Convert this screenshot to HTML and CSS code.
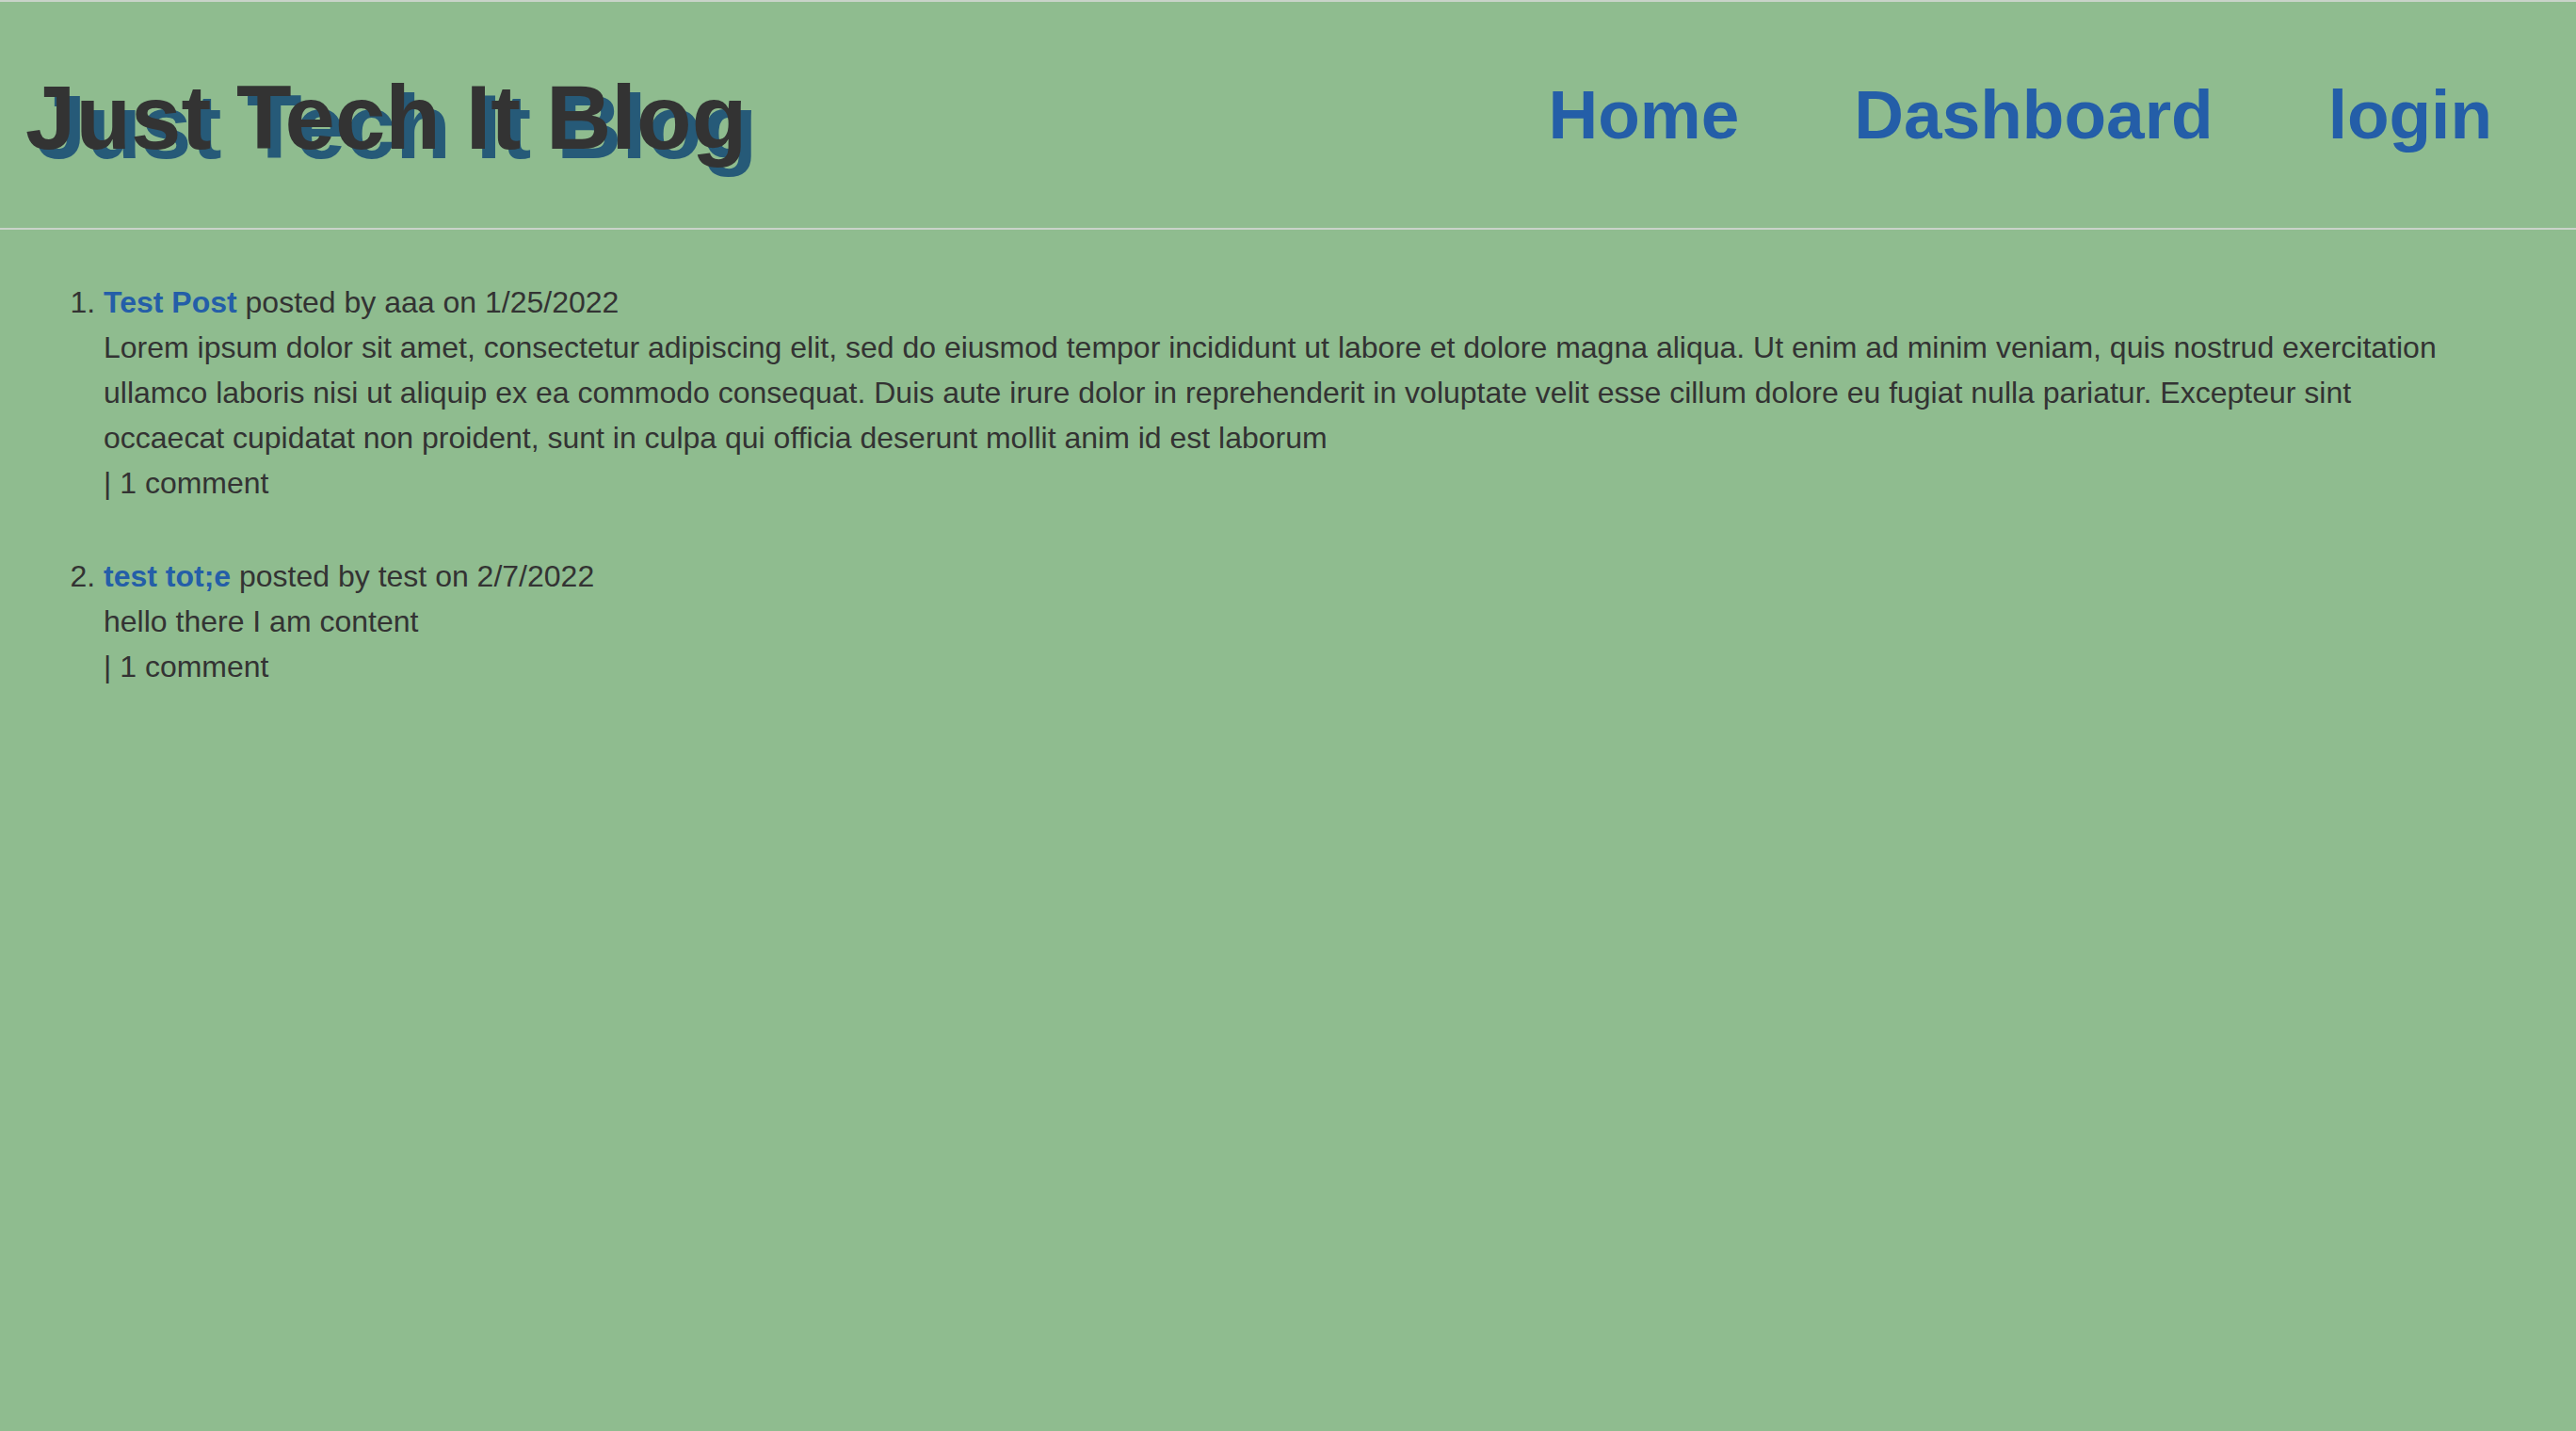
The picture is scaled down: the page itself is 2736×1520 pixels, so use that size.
FILE: index.html
```html
<!DOCTYPE html>
<html lang="en">
<head>
<meta charset="utf-8">
<title>Just Tech It Blog</title>
<link rel="stylesheet" href="styles.css">
</head>
<body>
<header class="site-header">
  <h1 class="site-title">Just Tech It Blog</h1>
  <nav class="site-nav">
    <a class="nav-link" href="#">Home</a>
    <a class="nav-link" href="#">Dashboard</a>
    <a class="nav-link" href="#">login</a>
  </nav>
</header>
<main class="content">
  <ol class="post-list">
    <li class="post">
      <div class="post-head"><a class="post-title" href="#">Test Post</a> posted by aaa on 1/25/2022</div>
      <div class="post-body">Lorem ipsum dolor sit amet, consectetur adipiscing elit, sed do eiusmod tempor incididunt ut labore et dolore magna aliqua. Ut enim ad minim veniam, quis nostrud exercitation ullamco laboris nisi ut aliquip ex ea commodo consequat. Duis aute irure dolor in reprehenderit in voluptate velit esse cillum dolore eu fugiat nulla pariatur. Excepteur sint occaecat cupidatat non proident, sunt in culpa qui officia deserunt mollit anim id est laborum</div>
      <div class="post-meta">| 1 comment</div>
    </li>
    <li class="post">
      <div class="post-head"><a class="post-title" href="#">test tot;e</a> posted by test on 2/7/2022</div>
      <div class="post-body">hello there I am content</div>
      <div class="post-meta">| 1 comment</div>
    </li>
  </ol>
</main>
</body>
</html>
```
FILE: styles.css
```css
html, body {
  margin: 0;
  padding: 0;
}
body {
  background: #8fbc8f;
  color: #333333;
  font-family: "Liberation Sans", Arial, sans-serif;
  font-size: 32px;
  line-height: 1.5;
  min-height: 1520px;
}
.site-header {
  display: flex;
  justify-content: space-between;
  align-items: center;
  border-top: 2px solid #c9d3c9;
  border-bottom: 2px solid #c9d3c9;
  padding: 0 89px 0 27px;
  height: 240px;
}
.site-title {
  margin: 0;
  font-size: 96px;
  font-weight: 700;
  line-height: 1.15;
  color: #333333;
  text-shadow: 11px 10px 0 #265a78;
  position: relative;
  top: 3px;
}
.site-nav {
  display: flex;
  gap: 122px;
}
.nav-link {
  font-size: 73px;
  font-weight: 700;
  color: #245ea8;
  text-decoration: none;
  line-height: 1.15;
}
.content {
  padding: 53px 110px 0 110px;
}
.post-list {
  margin: 0;
  padding: 0;
  list-style: decimal outside;
}
.post {
  margin-bottom: 51px;
}
.post-title {
  color: #245ea8;
  font-weight: 700;
  text-decoration: none;
}
```
